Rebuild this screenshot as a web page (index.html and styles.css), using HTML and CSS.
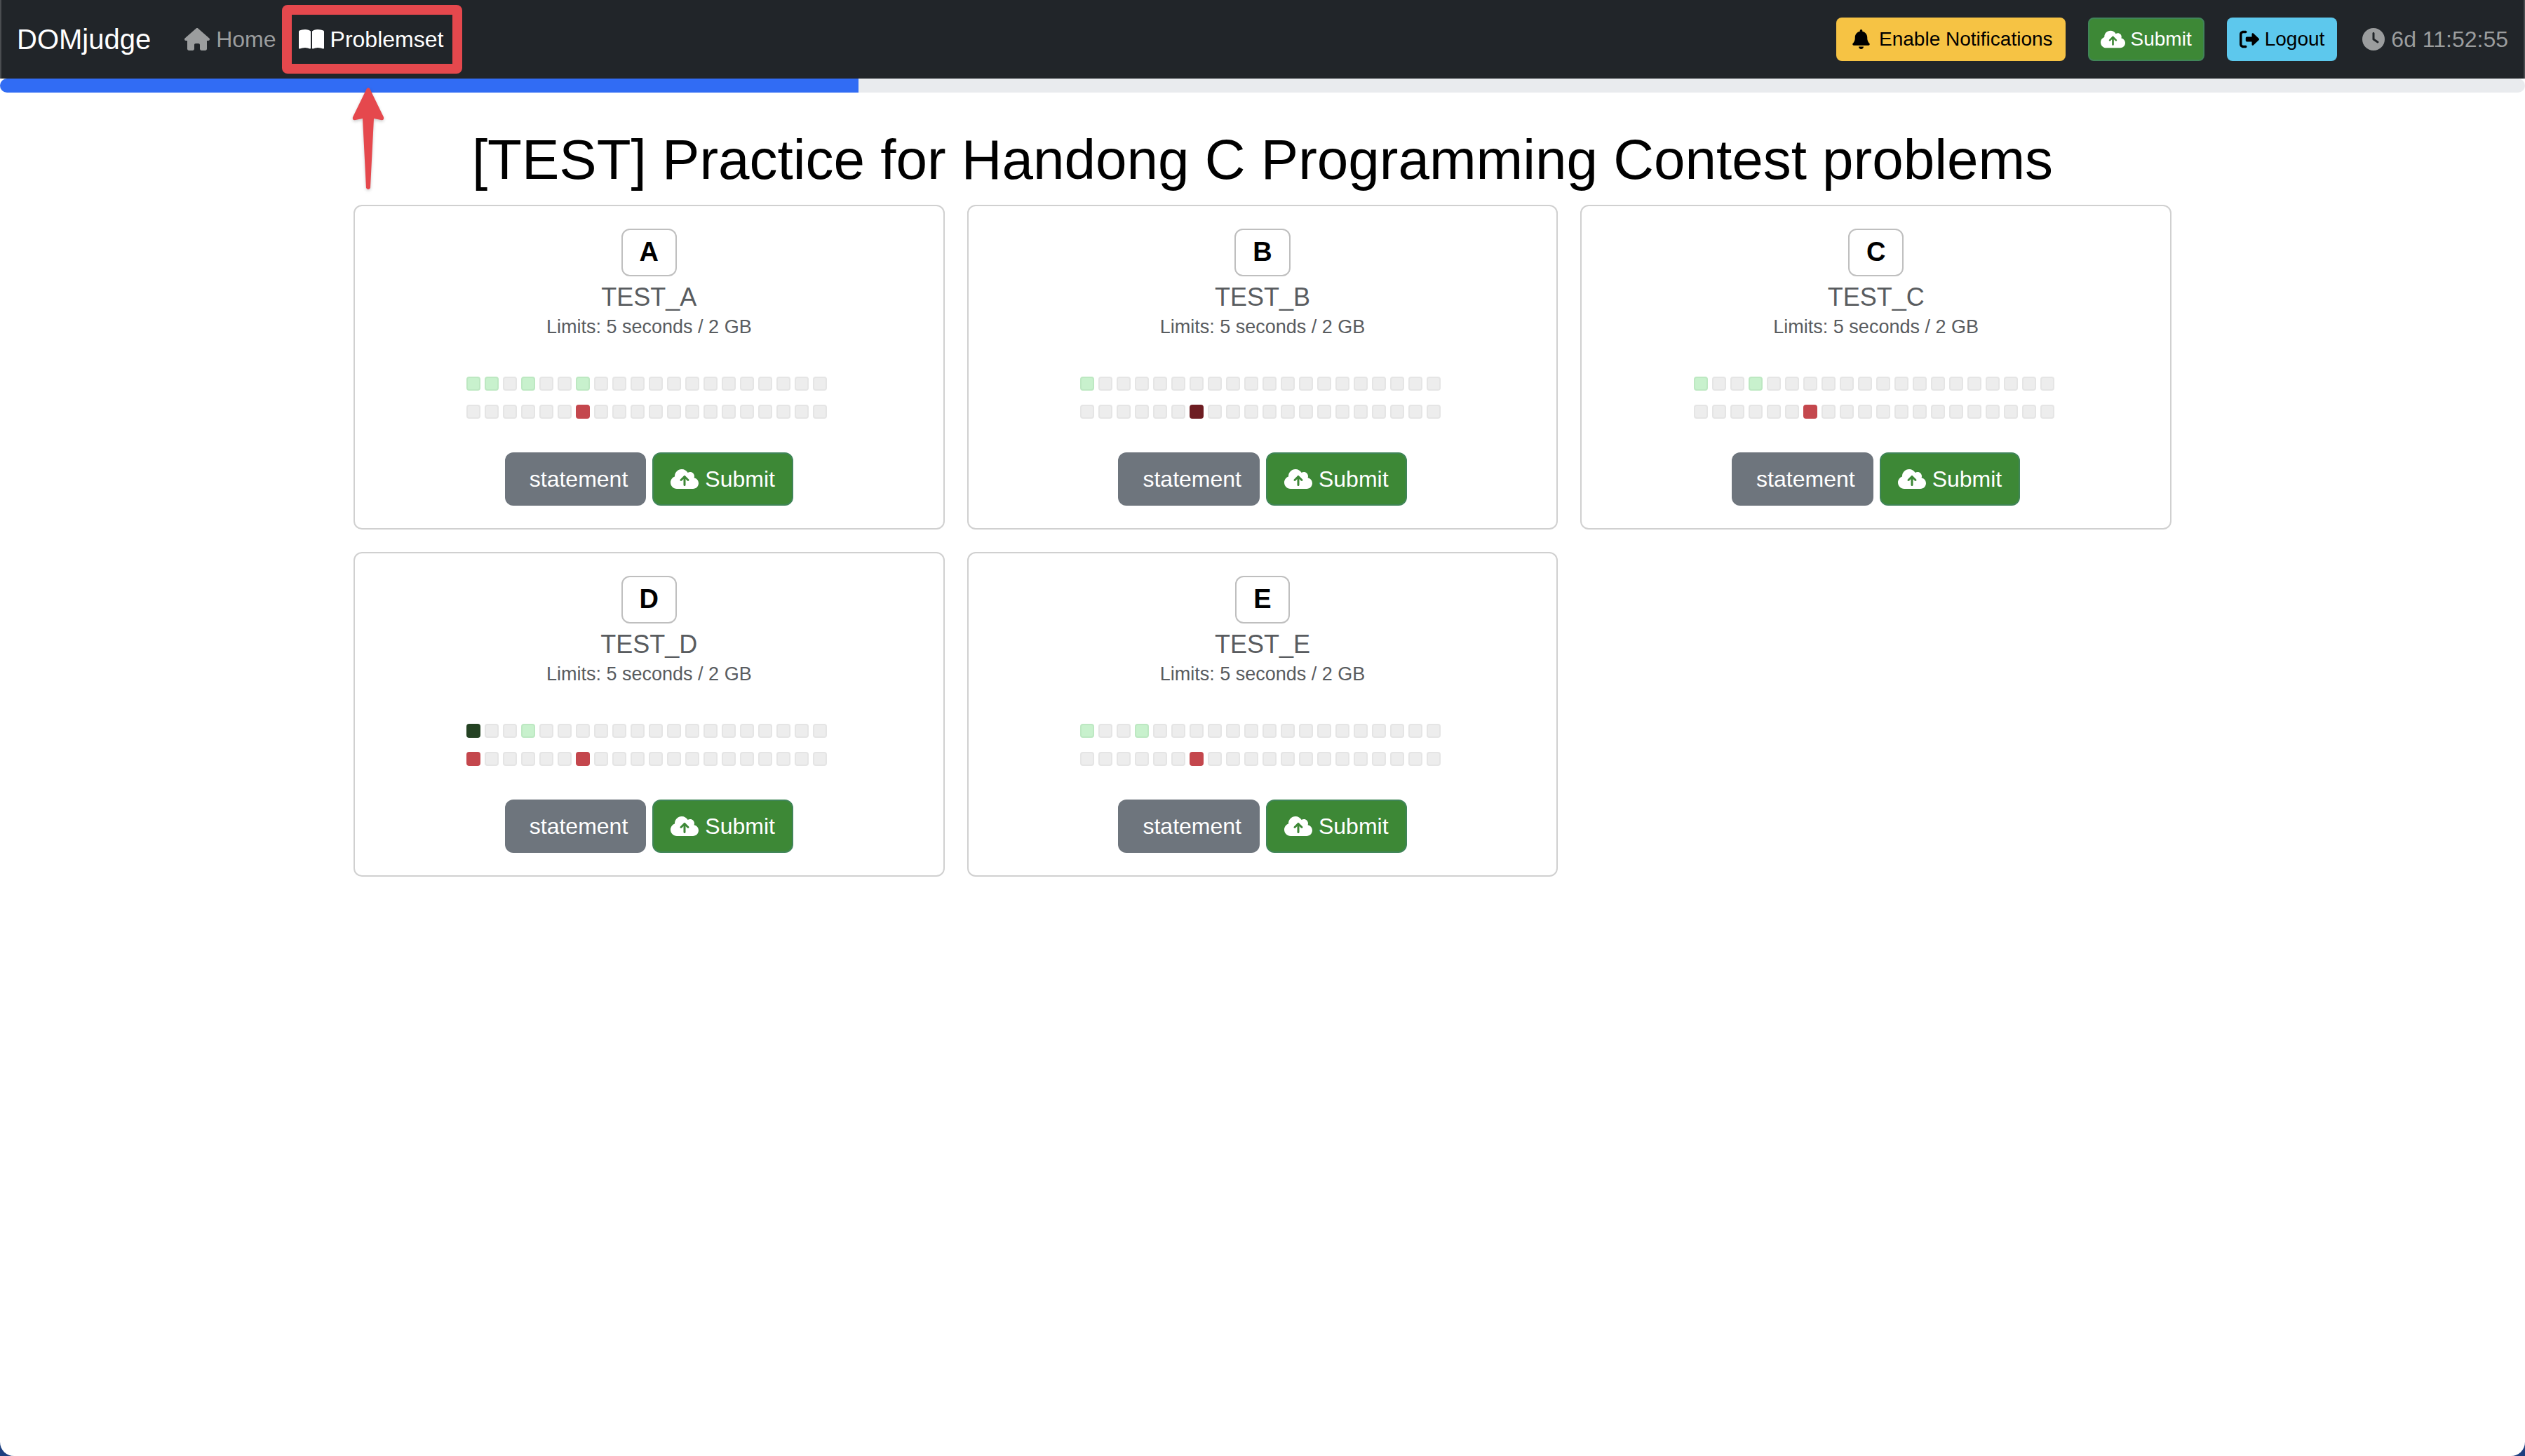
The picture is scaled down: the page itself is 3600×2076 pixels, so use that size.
FILE: index.html
```html
<!DOCTYPE html>
<html lang="en">
<head>
<meta charset="utf-8">
<title>Problemset - DOMjudge</title>
<link rel="stylesheet" href="styles.css">
</head>
<body>
<svg class="sprite" aria-hidden="true">
  <symbol id="home" viewBox="0 0 576 512"><path d="M575.8 255.5c0 18-15 32.100-32 32.100h-32l.7 160.200c0 2.700-.2 5.400-.5 8.100V472c0 22.100-17.900 40-40 40H456c-1.100 0-2.200 0-3.300-.1c-1.400 .1-2.800 .1-4.200 .1H416 392c-22.100 0-40-17.900-40-40V448 384c0-17.700-14.300-32-32-32H256c-17.700 0-32 14.300-32 32v64 24c0 22.100-17.900 40-40 40H160 128.100c-1.500 0-3-.1-4.500-.2c-1.200 .1-2.400 .2-3.600 .2H104c-22.100 0-40-17.900-40-40V360c0-.9 0-1.900 .1-2.800V287.600H32c-18 0-32-14-32-32.100c0-9 3-17 10-24L266.400 8c7-7 15-8 22-8s15 2 21 7L564.800 231.500c8 7 12 15 11 24z"/></symbol>
  <symbol id="book" viewBox="0 0 576 512"><path d="M249.600 471.500c10.800 3.800 22.400-4.100 22.400-15.500V78.600c0-4.200-1.600-8.400-5-11C247.400 52 202.400 32 144 32C93.500 32 46.300 45.300 18.100 56.100C6.800 60.500 0 71.700 0 83.800V454.100c0 11.900 12.800 20.200 24.100 16.500C55.600 460.100 105.500 448 144 448c33.900 0 79 14 105.600 23.500zm76.800 0C353 462 398.100 448 432 448c38.500 0 88.400 12.100 119.900 22.600c11.300 3.800 24.100-4.600 24.100-16.500V83.800c0-12.100-6.800-23.300-18.100-27.600C529.700 45.300 482.500 32 432 32c-58.400 0-103.400 20-123 35.600c-3.300 2.600-5 6.800-5 11V456c0 11.400 11.700 19.300 22.400 15.500z"/></symbol>
  <symbol id="bell" viewBox="0 0 448 512"><path d="M224 0c-17.700 0-32 14.300-32 32V51.200C119 66 64 130.600 64 208v18.800c0 47-17.300 92.400-48.500 127.600l-7.400 8.300c-8.400 9.400-10.400 22.900-5.300 34.400S19.400 416 32 416H416c12.600 0 24-7.400 29.200-18.900s3.100-25-5.300-34.400l-7.400-8.300C401.300 319.200 384 273.900 384 226.800V208c0-77.400-55-142-128-156.800V32c0-17.700-14.300-32-32-32zm45.300 493.300c12-12 18.700-28.300 18.700-45.300H224 160c0 17 6.700 33.300 18.700 45.300s28.300 18.700 45.300 18.700s33.300-6.700 45.300-18.700z"/></symbol>
  <symbol id="cloud" viewBox="0 0 640 512"><path d="M144 480C64.500 480 0 415.500 0 336c0-62.800 40.200-116.200 96.200-135.900c-.1-2.700-.2-5.400-.2-8.100c0-88.400 71.600-160 160-160c59.300 0 111 32.200 138.700 80.200C409.900 102 428.300 96 448 96c53 0 96 43 96 96c0 12.200-2.300 23.800-6.400 34.600C596 238.400 640 290.100 640 352c0 70.700-57.300 128-128 128H144zm79-217c-9.400 9.400-9.400 24.600 0 33.900s24.600 9.400 33.900 0l39-39V392c0 13.300 10.700 24 24 24s24-10.700 24-24V257.900l39 39c9.400 9.400 24.600 9.400 33.900 0s9.400-24.600 0-33.900l-80-80c-9.400-9.400-24.600-9.400-33.900 0l-80 80z"/></symbol>
  <symbol id="logout" viewBox="0 0 512 512"><path d="M160 96c17.700 0 32-14.300 32-32s-14.300-32-32-32H96C43 32 0 75 0 128V384c0 53 43 96 96 96h64c17.700 0 32-14.300 32-32s-14.300-32-32-32H96c-17.700 0-32-14.300-32-32V128c0-17.700 14.300-32 32-32h64zM504.500 273.400c4.800-4.500 7.500-10.800 7.500-17.400s-2.700-12.900-7.500-17.400l-144-136c-7-6.600-17.200-8.400-26-4.600s-14.500 12.500-14.500 22v72H192c-17.700 0-32 14.300-32 32v64c0 17.700 14.300 32 32 32H320v72c0 9.600 5.700 18.200 14.500 22s19 2 26-4.600l144-136z"/></symbol>
  <symbol id="clock" viewBox="0 0 512 512"><path d="M256 0a256 256 0 1 1 0 512A256 256 0 1 1 256 0zM232 120V256c0 8 4 15.500 10.700 20l96 64c11 7.400 25.900 4.400 33.300-6.700s4.400-25.900-6.700-33.300L280 243.200V120c0-13.300-10.700-24-24-24s-24 10.700-24 24z"/></symbol>
</svg>

<nav class="navbar">
  <a class="brand" href="#">DOMjudge</a>
  <a class="nav-link" href="#"><svg class="icon wide"><use href="#home"/></svg>Home</a>
  <a class="nav-link active" href="#"><svg class="icon wide"><use href="#book"/></svg>Problemset
    <span class="highlight"></span>
    <svg class="arrow" viewBox="0 0 52 152"><path d="M26 3Q28 3 29 6L48 45Q49 50 44 49L34 47L29 146Q26 150 23 146L18 47L8 49Q3 50 4 45L23 6Q24 3 26 3Z"/></svg>
  </a>
  <div class="nav-actions">
    <button class="btn small warning" type="button"><svg class="icon bell"><use href="#bell"/></svg>Enable Notifications</button>
    <button class="btn small success" type="button"><svg class="icon cloud"><use href="#cloud"/></svg>Submit</button>
    <button class="btn small info" type="button"><svg class="icon"><use href="#logout"/></svg>Logout</button>
    <span class="timer"><svg class="icon"><use href="#clock"/></svg>6d 11:52:55</span>
  </div>
</nav>
<div class="progress"><div class="progress-bar" style="width:34%"></div></div>

<main class="container">
  <h1>[TEST] Practice for Handong C Programming Contest problems</h1>
  <div class="problems" id="problems"></div>
</main>
<script src="problems.js"></script>
</body>
</html>
```
FILE: styles.css
```css
* { box-sizing: border-box; }
html { background: #1c3f80; }
body {
  margin: 0;
  min-height: 100vh;
  background: #fff;
  border-radius: 0 0 20px 20px;
  font: 32px/48px "Liberation Sans", Arial, sans-serif;
  color: #000;
}
.sprite { position: absolute; width: 0; height: 0; }
a { color: inherit; text-decoration: none; }

.navbar {
  display: flex;
  align-items: center;
  min-height: 112px;
  padding: 16px 22px;
  border: solid #4a4d50;
  border-width: 0 2px;
  background: #212529;
  color: #9b9d9e;
}
.brand { margin-right: 48px; font-size: 40px; line-height: 60px; color: #fff; }
.nav-link { position: relative; display: flex; align-items: center; gap: 9px; margin-right: 32px; }
.nav-link.active { color: #fff; }
.icon { flex: none; width: 32px; height: 32px; fill: currentColor; }
.icon.wide { width: 36px; }
.icon.cloud { width: 40px; }

/* Callout drawn over the current menu entry */
.highlight {
  position: absolute;
  inset: -25px -27px -25px -24px;
  border: 14px solid #e5484d;
  border-radius: 8px;
}
.arrow {
  position: absolute;
  left: 73px;
  top: 90px;
  width: 52px;
  height: 152px;
  fill: #e5484d;
  filter: drop-shadow(0 2px 2px rgba(0, 0, 0, .2));
}

.nav-actions { display: flex; align-items: center; gap: 32px; margin-left: auto; }
.timer { display: flex; align-items: center; gap: 9px; margin-left: 4px; }

.btn {
  display: flex;
  align-items: center;
  justify-content: center;
  gap: 9px;
  padding: 12px 24px;
  border: 2px solid transparent;
  border-radius: 12px;
  font: inherit;
  color: #fff;
}
.btn.small { padding: 8px 16px; gap: 8px; border-radius: 8px; font-size: 28px; line-height: 42px; }
.btn.small .icon { width: 28px; height: 28px; }
.btn.small .icon.cloud, .btn.small .icon.bell { width: 35px; }
.btn.warning { background: #f6c344; color: #000; }
.btn.success { background: #3d8836; border-color: #408558; }
.btn.info { background: #5dc8ed; color: #000; }
.btn.secondary { background: #6e757d; padding-left: 33px; }

.progress { height: 20px; border-radius: 12px; background: #e9ebee; overflow: hidden; }
.progress-bar { height: 100%; background: #316cf4; }

.container { max-width: 2640px; margin: 0 auto; padding: 48px 24px; }
h1 { margin: 0 0 16px; font-size: 80px; line-height: 96px; font-weight: 400; text-align: center; }
.problems { display: grid; grid-template-columns: repeat(3, 1fr); gap: 32px; }

.card {
  display: flex;
  flex-direction: column;
  align-items: center;
  padding: 32px;
  border: 2px solid #d0d0d0;
  border-radius: 12px;
}
.badge {
  padding: 8px 24px 10px;
  border: 2px solid #bfbfbf;
  border-radius: 12px;
  font-size: 38px;
  line-height: 46px;
  font-weight: 700;
}
.name { margin: 8px 0 0; font-size: 36px; line-height: 44px; font-weight: 400; color: #595c5f; }
.limits { margin: 0 0 51px; font-size: 27px; line-height: 40px; color: #595c5f; }
.tests { display: flex; gap: 6px; margin: 0 6px 20px 0; }
.cell { width: 20px; height: 20px; border: 2px solid #e5e5e5; border-radius: 4px; background: #ededed; }
.cell.pass { background: #c8f1cd; border-color: #bde8c2; }
.cell.pass-strong { background: #244223; border-color: #244223; }
.cell.fail { background: #c4474d; border-color: #c4474d; }
.cell.fail-strong { background: #6e1d22; border-color: #6e1d22; }
.actions { display: flex; gap: 9px; margin-top: 28px; }
```
FILE: problems.js
```js
const problems = [
  { id: "A", right: { 0: "pass", 1: "pass", 3: "pass", 6: "pass" }, wrong: { 6: "fail" } },
  { id: "B", right: { 0: "pass" }, wrong: { 6: "fail-strong" } },
  { id: "C", right: { 0: "pass", 3: "pass" }, wrong: { 6: "fail" } },
  { id: "D", right: { 0: "pass-strong", 3: "pass" }, wrong: { 0: "fail", 6: "fail" } },
  { id: "E", right: { 0: "pass", 3: "pass" }, wrong: { 6: "fail" } }
];

const row = marks => '<div class="tests">' +
  Array.from({ length: 20 }, (_, i) => `<span class="cell ${marks[i] || ""}"></span>`).join("") + "</div>";

document.getElementById("problems").innerHTML = problems.map(p => `
  <section class="card">
    <span class="badge">${p.id}</span>
    <h2 class="name">TEST_${p.id}</h2>
    <p class="limits">Limits: 5 seconds / 2 GB</p>
    ${row(p.right)}${row(p.wrong)}
    <div class="actions">
      <button class="btn secondary" type="button">statement</button>
      <button class="btn success" type="button"><svg class="icon cloud"><use href="#cloud"/></svg>Submit</button>
    </div>
  </section>`).join("");
```
